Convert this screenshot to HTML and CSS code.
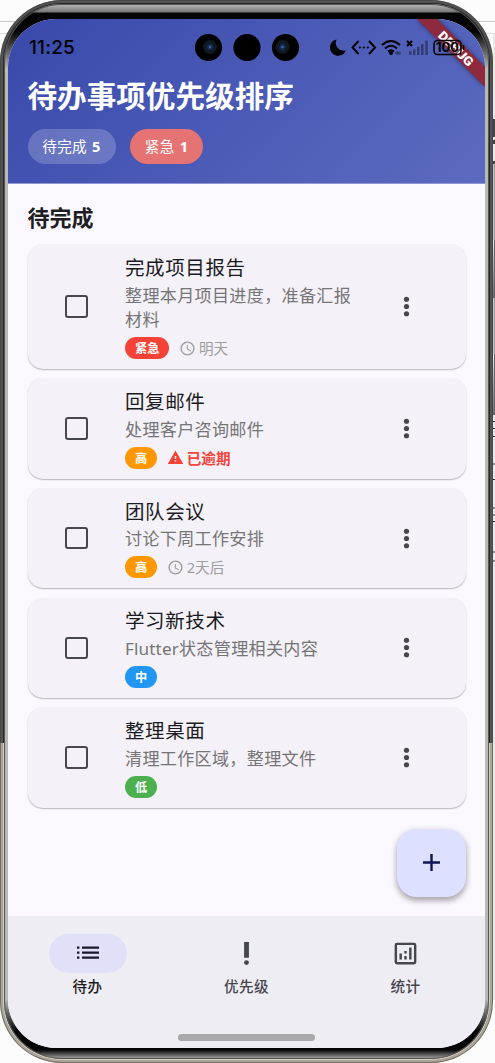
FILE: index.html
```html
<!DOCTYPE html>
<html lang="zh-CN">
<head>
<meta charset="utf-8">
<title>待办事项优先级排序</title>
<link rel="stylesheet" href="styles.css">
</head>
<body>
<svg class="backdrop" width="495" height="1063" viewBox="0 0 495 1063">
  <path d="M0 21.5H495" stroke="#c9c9c9"/>
  <path d="M0 33.5H495" stroke="#dedede"/>
  <path d="M494 34V1000" stroke="#e9e9e9" stroke-width="2"/>
  <path d="M494 119V137M494 140V144M494 161V164" stroke="#444" stroke-width="2"/>
  <path d="M494.300 164V240M494.300 296V354" stroke="#999" stroke-width="1.400"/>
  <path d="M494 240H495V298H493ZM494 354H495V415H493Z" fill="#666"/>
  <path d="M493 421.500H495M493 428.500H495M493 436.500H495M493 464H495M493 479.500H495M493 508H495M493 515H495M493 521.500H495M493 552H495M493 561H495" stroke="#333"/>
</svg>
<div class="phone">
<div class="rim">
<div class="bezel">
<main class="screen">
  <header class="header">
    <div class="status">
      <span class="clock">11:25</span>
    </div>
    <h1>待办事项优先级排序</h1>
    <div class="chips">
      <span class="chip">待完成 <b>5</b></span>
      <span class="chip chip-urgent">紧急 <b>1</b></span>
    </div>
  </header>
  <section class="content">
    <h2>待完成</h2>
    <article class="card">
      <span class="check"></span>
      <div class="info">
        <h3>完成项目报告</h3>
        <p>整理本月项目进度，准备汇报材料</p>
        <div class="meta"><span class="tag urgent">紧急</span><svg class="mi" viewBox="0 0 24 24"><path d="M12 2a10 10 0 1 0 0 20 10 10 0 0 0 0-20zm0 18a8 8 0 1 1 0-16 8 8 0 0 1 0 16zm.5-13H11v6l5.250 3.150.75-1.230-4.500-2.670z"/></svg><span class="due">明天</span></div>
      </div>
      <svg class="more" viewBox="0 0 24 24"><circle cx="12" cy="6" r="2.150"/><circle cx="12" cy="12" r="2.150"/><circle cx="12" cy="18" r="2.150"/></svg>
    </article>
    <article class="card">
      <span class="check"></span>
      <div class="info">
        <h3>回复邮件</h3>
        <p>处理客户咨询邮件</p>
        <div class="meta"><span class="tag high">高</span><svg class="mi late" viewBox="0 0 24 24"><path d="M1 21h22L12 2 1 21zm12-3h-2v-2h2v2zm0-4h-2v-4h2v4z"/></svg><span class="due late">已逾期</span></div>
      </div>
      <svg class="more" viewBox="0 0 24 24"><circle cx="12" cy="6" r="2.150"/><circle cx="12" cy="12" r="2.150"/><circle cx="12" cy="18" r="2.150"/></svg>
    </article>
    <article class="card">
      <span class="check"></span>
      <div class="info">
        <h3>团队会议</h3>
        <p>讨论下周工作安排</p>
        <div class="meta"><span class="tag high">高</span><svg class="mi" viewBox="0 0 24 24"><path d="M12 2a10 10 0 1 0 0 20 10 10 0 0 0 0-20zm0 18a8 8 0 1 1 0-16 8 8 0 0 1 0 16zm.5-13H11v6l5.250 3.150.75-1.230-4.500-2.670z"/></svg><span class="due">2天后</span></div>
      </div>
      <svg class="more" viewBox="0 0 24 24"><circle cx="12" cy="6" r="2.150"/><circle cx="12" cy="12" r="2.150"/><circle cx="12" cy="18" r="2.150"/></svg>
    </article>
    <article class="card">
      <span class="check"></span>
      <div class="info">
        <h3>学习新技术</h3>
        <p><span class="latin">Flutter</span>状态管理相关内容</p>
        <div class="meta"><span class="tag medium">中</span></div>
      </div>
      <svg class="more" viewBox="0 0 24 24"><circle cx="12" cy="6" r="2.150"/><circle cx="12" cy="12" r="2.150"/><circle cx="12" cy="18" r="2.150"/></svg>
    </article>
    <article class="card">
      <span class="check"></span>
      <div class="info">
        <h3>整理桌面</h3>
        <p>清理工作区域，整理文件</p>
        <div class="meta"><span class="tag low">低</span></div>
      </div>
      <svg class="more" viewBox="0 0 24 24"><circle cx="12" cy="6" r="2.150"/><circle cx="12" cy="12" r="2.150"/><circle cx="12" cy="18" r="2.150"/></svg>
    </article>
  </section>
  <button class="fab" aria-label="添加"><svg viewBox="0 0 24 24"><path d="M19 13h-6v6h-2v-6H5v-2h6V5h2v6h6v2z"/></svg></button>
  <nav class="nav">
    <div class="tab active"><span class="pill"><svg viewBox="0 0 24 14"><path d="M1 .5h2.400v2.300H1zM1 5.500h2.400v2.300H1zM1 10.500h2.400v2.300H1zM6 .5h17v2.300H6zM6 5.500h17v2.300H6zM6 10.500h17v2.300H6z"/></svg></span>待办</div>
    <div class="tab"><span class="pill"><svg viewBox="0 0 24 24"><circle cx="12" cy="19.500" r="2"/><path d="M10 2.500h4v13h-4z"/></svg></span>优先级</div>
    <div class="tab"><span class="pill"><svg viewBox="0 0 24 24"><path d="M19 3H5a2 2 0 0 0-2 2v14a2 2 0 0 0 2 2h14a2 2 0 0 0 2-2V5a2 2 0 0 0-2-2zm0 16H5V5h14v14zM7 12h2v5H7zm8-5h2v10h-2zm-4 7h2v3h-2zm0-4h2v2h-2z"/></svg></span>统计</div>
    <i class="home"></i>
  </nav>
  <svg class="overlay" width="477" height="90" viewBox="8 19 477 90">
    <defs>
      <radialGradient id="lens"><stop offset="0" stop-color="#4f8cc8"/><stop offset=".2" stop-color="#1b3560"/><stop offset=".5" stop-color="#10192a"/><stop offset=".85" stop-color="#111820"/><stop offset="1" stop-color="#000"/></radialGradient>
      <filter id="soft" x="-20%" y="-20%" width="140%" height="140%"><feGaussianBlur stdDeviation="2.500"/></filter>
    </defs>
    <circle cx="208.500" cy="47.500" r="13.600"/><circle cx="247" cy="47.500" r="13.600"/><circle cx="285.500" cy="47.500" r="13.600"/>
    <circle cx="210" cy="47" r="7.500" fill="url(#lens)"/><circle cx="282.500" cy="47" r="7.500" fill="url(#lens)"/>
    <path d="M417 19H437L485 67V87Z" fill="#000" opacity=".45" filter="url(#soft)"/>
    <path d="M417 19H437L485 67V87Z" fill="#8e293e"/>
    <text class="debug" x="456" y="53" text-anchor="middle" textLength="44" lengthAdjust="spacingAndGlyphs" transform="rotate(45 456 48.500)">DEBUG</text>
    <path d="M336.500 39.500A8.200 8.200 0 1 0 345.800 50.500A8 8 0 0 1 336.500 39.500Z"/>
    <g fill="none" stroke="#000" stroke-width="2"><path d="M358.500 41L352.500 47.500L358.500 54M369 41L375 47.500L369 54"/>
    <path d="M382 45Q391 37 400 45M385 48.500Q391 43 397 48.500M388 51.500Q391 49 394 51.500"/>
    <path d="M407 41L412 46M412 41L407 46"/></g>
    <circle cx="359.800" cy="47.500" r="1.100"/><circle cx="363.800" cy="47.500" r="1.100"/><circle cx="367.800" cy="47.500" r="1.100"/><circle cx="391" cy="53" r="2"/>
    <ellipse cx="398" cy="53" rx="3" ry="1.800" opacity=".35"/>
    <path d="M409 51h2.500v4H409zM413 49.500h2.500V55H413zM417 47h2.500v8H417zM421 44h2.500v11H421zM425.300 40.500h2.500V55h-2.500z" opacity=".38"/>
    <rect x="434" y="40.500" width="27" height="14" rx="3.500" fill="none" stroke="#000" stroke-width="1.500"/>
    <path d="M463.500 45v5" stroke="#000" stroke-width="1.500"/>
    <text class="battery" x="447.500" y="52.400" text-anchor="middle" textLength="23" lengthAdjust="spacingAndGlyphs">100</text>
  </svg>
</main>
</div>
</div>
</div>
</body>
</html>
```
FILE: styles.css
```css
* { box-sizing: border-box; }
body { margin: 0; width: 495px; height: 1063px; overflow: hidden; position: relative; background: #fcfcfc; font-family: "Noto Sans", "Noto Sans CJK SC", sans-serif; }
.backdrop { position: absolute; top: 0; left: 0; }
.phone { position: relative; width: 493px; height: 1063px; padding: 2px; border-radius: 62px; background: linear-gradient(#555 0 743px, #b0a898 743px); box-shadow: inset 0 0 0 1px rgba(60,60,60,.55); }
.rim { height: 100%; padding: 2px; border-radius: 60px; background: linear-gradient(#272727 0 741px, #d8d0c2 741px); box-shadow: inset 0 0 0 1px rgba(120,120,115,.55); }
.bezel { height: 100%; padding: 15px 4px 11px; border-radius: 58px; box-shadow: inset 0 0 0 1px #555; background: linear-gradient(#bbb 0, #777 8px, #050505 9px, #050505 28px, #b8b8b5 65px, #b8b8b5 calc(100% - 60px), #050505 calc(100% - 28px), #050505 calc(100% - 9px), #999 calc(100% - 1px)); }
.screen { position: relative; width: 477px; height: 1029px; border-radius: 48px; overflow: hidden; display: flex; flex-direction: column; background: #fbf8ff; }
.header { height: 165px; flex: none; padding: 0 19.500px; color: #fff; background: linear-gradient(135deg, #3949ab, #5c6bc0); border-bottom: 1px solid #8f98d5; }
.status { height: 56px; padding-top: 1px; display: flex; align-items: center; color: #000; }
.clock { font: 500 19px/24px Inter, sans-serif; padding-left: 1.500px; letter-spacing: .2px; }
h1, h2, h3, p { margin: 0; }
h1 { font-size: 29.600px; line-height: 36px; margin-top: 2px; font-weight: 700; font-family: "Noto Sans CJK SC", sans-serif; }
.chips { display: flex; gap: 14.500px; margin-top: 15.500px; }
.chip { height: 35.500px; padding: 0 14.800px; border-radius: 18px; font-size: 14.600px; line-height: 35px; letter-spacing: .3px; background: rgba(255,255,255,.2); white-space: nowrap; }
.chip b { margin-left: 1px; }
.chip-urgent { background: #e57373; }
.content { flex: 1; padding: 15px 19.500px 0; display: flex; flex-direction: column; gap: 9.500px; }
h2 { font-size: 22px; line-height: 36px; margin-bottom: -.2px; color: #1d1e23; }
.card { display: flex; align-items: center; border-radius: 15px; background: #f4f1f8; box-shadow: 0 1px 1.500px rgba(0,0,0,.28); }
.check { flex: none; width: 22.500px; height: 22.500px; margin-left: 37.500px; margin-right: 37.500px; border: 2.500px solid #47474e; border-radius: 3px; }
.info { width: 244px; padding: 9.500px 0 9.800px; }
h3 { font-size: 19.500px; line-height: 28px; font-weight: 400; letter-spacing: .6px; color: #1b1b21; margin-bottom: 1.800px; }
p { width: 235px; font-size: 17.100px; line-height: 24.400px; letter-spacing: .3px; color: #757575; }
.latin { letter-spacing: .15px; }
.meta { height: 22px; margin-top: 4.700px; display: flex; align-items: center; }
.tag { height: 22px; padding: 0 10px; border-radius: 11px; color: #fff; font-size: 12.200px; line-height: 23px; font-weight: 700; margin-right: 10px; }
.urgent { background: #f44336; }
.high { background: #ff9800; }
.medium { background: #2196f3; }
.low { background: #4caf50; }
.mi { width: 17px; height: 17px; fill: #9e9e9e; margin-right: 2.500px; }
.due { font-size: 14.600px; line-height: 22px; color: #9e9e9e; }
.late { color: #f44336; fill: #f44336; font-weight: 700; }
.more { width: 29px; height: 29px; margin-left: 23.300px; fill: #46464f; }
.fab { position: absolute; left: 389px; top: 809.500px; width: 68.500px; height: 68.500px; padding: 0; border: 0; border-radius: 20px; background: #dee0ff; box-shadow: 0 4px 6px rgba(0,0,0,.28), 0 1px 7px rgba(0,0,0,.12); display: grid; place-items: center; }
.fab svg { width: 29px; height: 29px; fill: #101452; }
.nav { position: relative; flex: none; height: 132px; display: flex; background: #eeedf3; }
.tab { flex: 1; display: flex; flex-direction: column; align-items: center; padding-top: 17.500px; font-size: 14.600px; line-height: 20px; letter-spacing: .4px; font-weight: 500; color: #46464f; gap: 3px; }
.pill { width: 78px; height: 39px; border-radius: 20px; display: grid; place-items: center; }
.pill svg { width: 29px; height: 29px; fill: #46464f; }
.active { color: #1b1b21; }
.active .pill { background: #e0e0f9; }
.active .pill svg { fill: #181a2c; width: 24px; height: 14px; }
.home { position: absolute; left: 170px; top: 118px; width: 137px; height: 7px; border-radius: 4px; background: #a9a8ad; }
.overlay { position: absolute; left: 0; top: 0; }
.debug { font: 900 12.500px Roboto, sans-serif; fill: #fff; }
.battery { font: 700 13px Inter, sans-serif; }
```
